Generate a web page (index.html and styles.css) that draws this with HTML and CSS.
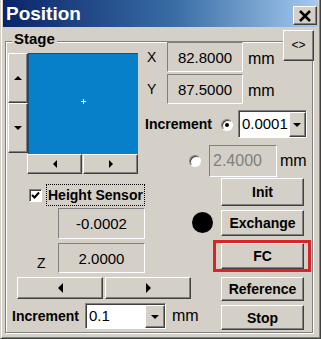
FILE: index.html
```html
<!DOCTYPE html>
<html lang="en">
<head>
    <meta charset="UTF-8">
    <title>Position</title>
    <link rel="stylesheet" href="styles.css">
</head>
<body>
    <div class="window">
        <div class="titlebar">
            <span class="title">Position</span>
            <button class="close" aria-label="Close">
                <svg width="12" height="12" viewBox="0 0 12 12"><path d="M1 1L11 11M11 1L1 11" stroke="#000" stroke-width="2.6"/></svg>
            </button>
        </div>
        <div class="client">
            <div class="group">
                <span class="legend">Stage</span>
                <button class="btn toggle">&lt;&gt;</button>

                <div class="top">
                    <div class="pad">
                        <div class="pad-vert">
                            <button class="btn"><i class="tri up"></i></button>
                            <button class="btn"><i class="tri down"></i></button>
                        </div>
                        <div class="pad-view"><span class="cross"></span></div>
                        <div class="pad-horiz">
                            <button class="btn"><i class="tri left"></i></button>
                            <button class="btn"><i class="tri right"></i></button>
                        </div>
                    </div>

                    <div class="coords">
                        <div class="coord-row">
                            <span class="axis">X</span>
                            <div class="field coord">82.8000</div>
                            <span class="unit">mm</span>
                        </div>
                        <div class="coord-row second">
                            <span class="axis">Y</span>
                            <div class="field coord">87.5000</div>
                            <span class="unit">mm</span>
                        </div>
                        <div class="step-row">
                            <span class="lbl">Increment</span>
                            <span class="radio on"></span>
                            <div class="combo step-combo">
                                <span class="combo-text">0.0001</span>
                                <span class="combo-btn"><i class="tri down"></i></span>
                            </div>
                        </div>
                        <div class="custom-row">
                            <span class="radio"></span>
                            <div class="field custom">2.4000</div>
                            <span class="unit">mm</span>
                        </div>
                    </div>
                </div>

                <div class="bottom">
                    <div class="sensor">
                        <div class="check-row">
                            <span class="check">
                                <svg width="9" height="9" viewBox="0 0 9 9"><path d="M1 4L3.5 6.5L8 1.5" fill="none" stroke="#000" stroke-width="2"/></svg>
                            </span>
                            <span class="check-label">Height Sensor</span>
                        </div>
                        <div class="sensor-row">
                            <div class="field sensor-val">-0.0002</div>
                            <span class="led"></span>
                        </div>
                        <div class="sensor-row z-row">
                            <span class="axis z">Z</span>
                            <div class="field sensor-val">2.0000</div>
                        </div>
                        <div class="jog-row">
                            <button class="btn"><i class="tri left big"></i></button>
                            <button class="btn"><i class="tri right big"></i></button>
                        </div>
                        <div class="z-step-row">
                            <span class="lbl">Increment</span>
                            <div class="combo z-combo">
                                <span class="combo-text">0.1</span>
                                <span class="combo-btn"><i class="tri down"></i></span>
                            </div>
                            <span class="unit">mm</span>
                        </div>
                    </div>

                    <div class="actions">
                        <button class="btn action init">Init</button>
                        <button class="btn action exchange">Exchange</button>
                        <button class="btn action fc">FC</button>
                        <button class="btn action reference">Reference</button>
                        <button class="btn action stop">Stop</button>
                    </div>
                </div>
            </div>
        </div>
    </div>
</body>
</html>
```

FILE: styles.css
```css
/* Ventana estilo Windows clásico */
* {
    margin: 0;
    padding: 0;
    box-sizing: border-box;
    font-family: 'Liberation Sans', Arial, sans-serif;
}

body {
    background: #d4d0c8;
}

.window {
    width: 321px;
    height: 339px;
    background: #d4d0c8;
    border: 1px solid #404040;
    border-top: none;
    border-left-color: #d4d0c8;
    box-shadow: inset 1px 0 #fff, inset -1px -1px #808080;
    padding: 0 2px 2px 2px;
}

.titlebar {
    height: 27px;
    display: flex;
    justify-content: space-between;
    align-items: flex-start;
    background: linear-gradient(to right, #0a246a, #3a6ea5 55%, #a6caf0);
}

.title {
    color: #fff;
    font-size: 19px;
    font-weight: bold;
    line-height: 27px;
    padding-left: 3px;
}

.close {
    width: 24px;
    height: 19px;
    margin-top: 6px;
    margin-right: 1px;
    display: flex;
    align-items: center;
    justify-content: center;
    background: #d4d0c8;
    border: 1px solid;
    border-color: #fff #404040 #404040 #fff;
    box-shadow: inset -1px -1px #808080;
}

.client {
    padding: 14px 0 0 2px;
}

/* Marco del grupo */
.group {
    position: relative;
    width: 308px;
    height: 292px;
    border: 1px solid #808080;
    box-shadow: inset 1px 1px #fff, 1px 1px #fff;
}

.legend {
    position: absolute;
    left: 6px;
    top: -12px;
    padding: 0 2px;
    background: #d4d0c8;
    font-size: 15px;
    font-weight: bold;
    line-height: 18px;
}

/* Botones */
.btn {
    display: flex;
    align-items: center;
    justify-content: center;
    background: #d4d0c8;
    color: #000;
    border: 1px solid;
    border-color: #fff #404040 #404040 #fff;
    box-shadow: inset -1px -1px #808080;
    font-size: 14px;
    font-weight: bold;
}

.toggle {
    position: absolute;
    left: 277px;
    top: -12px;
    width: 31px;
    height: 31px;
    font-size: 12px;
    font-weight: normal;
    padding-bottom: 2px;
}

.tri {
    display: block;
    width: 0;
    height: 0;
    border-style: solid;
    border-color: transparent;
}

.tri.up {
    border-width: 0 4px 4px 4px;
    border-bottom-color: #000;
}

.tri.down {
    border-width: 4px 4px 0 4px;
    border-top-color: #000;
}

.tri.left {
    border-width: 4px 4px 4px 0;
    border-right-color: #000;
}

.tri.right {
    border-width: 4px 0 4px 4px;
    border-left-color: #000;
}

.tri.left.big {
    border-width: 5px 5px 5px 0;
}

.tri.right.big {
    border-width: 5px 0 5px 5px;
}

/* Campos */
.field {
    display: flex;
    align-items: center;
    justify-content: center;
    background: #d4d0c8;
    border: 1px solid;
    border-color: #808080 #fff #fff #808080;
    font-size: 15px;
}

.axis {
    font-size: 14px;
}

.unit {
    font-size: 16px;
}

.lbl {
    font-size: 14px;
    font-weight: bold;
}

.radio {
    position: relative;
    width: 12px;
    height: 12px;
    border-radius: 50%;
    border: 1px solid;
    border-color: #808080 #fff #fff #808080;
    background: #fff;
    box-shadow: inset 1px 1px #404040;
}

.radio.on::after {
    content: "";
    position: absolute;
    left: 3px;
    top: 3px;
    width: 4px;
    height: 4px;
    border-radius: 50%;
    background: #000;
}

.combo {
    display: flex;
    background: #fff;
    border: 1px solid;
    border-color: #808080 #fff #fff #808080;
    box-shadow: inset 1px 1px #404040;
    padding: 1px 0 0 1px;
}

.combo-text {
    flex: 1;
    overflow: hidden;
    white-space: nowrap;
    font-size: 15px;
    line-height: 24px;
    padding-left: 2px;
}

.combo-btn {
    width: 17px;
    display: flex;
    align-items: center;
    justify-content: center;
    background: #d4d0c8;
    border: 1px solid;
    border-color: #fff #404040 #404040 #fff;
    box-shadow: inset -1px -1px #808080;
}

/* Parte superior */
.top {
    display: flex;
}

.pad {
    margin: 11px 0 0 2px;
    display: grid;
    grid-template-columns: 20px 110px;
    grid-template-rows: 101px 20px;
}

.pad-vert {
    display: flex;
    flex-direction: column;
}

.pad-vert .btn {
    height: 50px;
}

.pad-view {
    display: flex;
    align-items: center;
    justify-content: center;
    background: #0780c9;
    border-top: 1px solid #1d4e78;
    border-left: 1px solid #1d4e78;
}

.cross {
    position: relative;
    width: 5px;
    height: 5px;
    margin-top: -6px;
}

.cross::before,
.cross::after {
    content: "";
    position: absolute;
    background: #fff;
}

.cross::before {
    left: 0;
    top: 2px;
    width: 5px;
    height: 1px;
}

.cross::after {
    left: 2px;
    top: 0;
    width: 1px;
    height: 5px;
}

.pad-horiz {
    grid-column: 2;
    display: flex;
    gap: 1px;
    margin-left: -1px;
}

.pad-horiz .btn {
    flex: 1;
}

.coords {
    margin-left: 7px;
    width: 166px;
}

.coord-row {
    display: flex;
    align-items: center;
    height: 30px;
}

.coord-row.second {
    margin-top: 2px;
}

.coord-row .axis {
    width: 22px;
    padding-left: 2px;
}

.coord {
    width: 76px;
    height: 30px;
}

.coord-row .unit {
    margin: 3px 0 0 5px;
}

.step-row {
    margin-top: 6px;
    height: 28px;
    display: flex;
    align-items: center;
}

.step-row .radio {
    margin: 2px 0 0 9px;
}

.step-combo {
    width: 69px;
    height: 28px;
    margin-left: 5px;
}

.custom-row {
    margin-top: 7px;
    height: 32px;
    display: flex;
    align-items: center;
    padding-left: 44px;
}

.custom {
    width: 68px;
    height: 32px;
    margin-left: 8px;
    justify-content: flex-start;
    padding-left: 3px;
    color: #808080;
    font-size: 16px;
}

.custom-row .unit {
    margin-left: 3px;
}

/* Parte inferior */
.bottom {
    display: flex;
}

.sensor {
    width: 215px;
}

.check-row {
    margin-top: 7px;
    height: 22px;
    display: flex;
    align-items: center;
    padding-left: 23px;
}

.check {
    width: 13px;
    height: 13px;
    display: flex;
    align-items: center;
    justify-content: center;
    background: #fff;
    border: 1px solid;
    border-color: #808080 #fff #fff #808080;
    box-shadow: inset 1px 1px #404040;
}

.check-label {
    margin-left: 4px;
    height: 22px;
    padding: 0 1px;
    border: 1px dotted #000;
    font-size: 14px;
    font-weight: bold;
    line-height: 20px;
}

.sensor-row {
    margin-top: 2px;
    display: flex;
    align-items: center;
    padding-left: 52px;
}

.sensor-val {
    width: 87px;
    height: 31px;
}

.led {
    width: 21px;
    height: 21px;
    margin: -3px 0 0 47px;
    border-radius: 50%;
    background: #000;
}

.z-row {
    margin-top: 4px;
    padding-left: 31px;
}

.z-row .sensor-val {
    height: 30px;
}

.axis.z {
    width: 21px;
    margin-top: 9px;
}

.jog-row {
    margin-top: 4px;
    padding-left: 11px;
    display: flex;
    gap: 2px;
}

.jog-row .btn {
    width: 86px;
    height: 22px;
}

.z-step-row {
    margin-top: 4px;
    padding-left: 6px;
    display: flex;
    align-items: center;
}

.z-combo {
    width: 81px;
    height: 26px;
    margin-left: 6px;
}

.z-combo .combo-text {
    line-height: 22px;
}

.z-combo .combo-btn {
    width: 20px;
}

.z-step-row .unit {
    margin-left: 6px;
}

.actions {
    width: 83px;
    margin-top: 1px;
    display: flex;
    flex-direction: column;
}

.action {
    height: 26px;
}

.init {
    height: 28px;
}

.exchange {
    margin-top: 4px;
}

.fc {
    position: relative;
    margin-top: 7px;
}

/* Marca roja sobre FC */
.fc::after {
    content: "";
    position: absolute;
    left: -9px;
    right: -8px;
    top: -4px;
    bottom: -4px;
    border: 3px solid #d9252a;
}

.reference {
    margin-top: 8px;
    height: 24px;
}

.stop {
    margin-top: 4px;
    height: 25px;
}
```
